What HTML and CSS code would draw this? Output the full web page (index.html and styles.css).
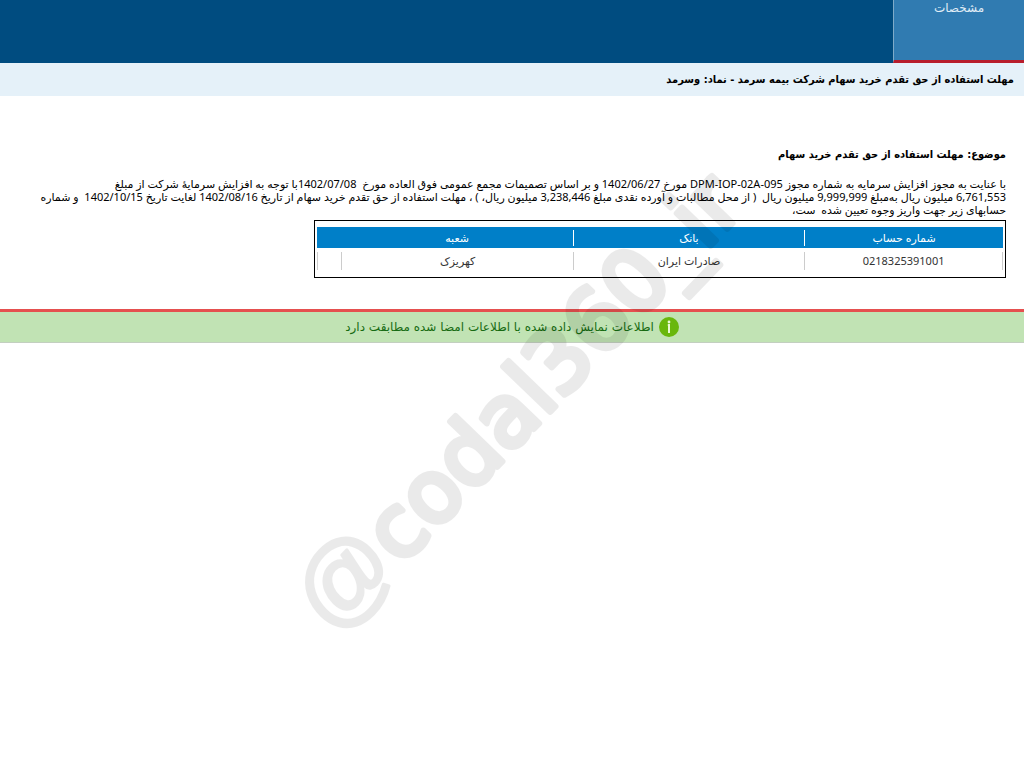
FILE: index.html
```html
<!DOCTYPE html>
<html lang="fa" dir="rtl">
<head>
  <meta charset="UTF-8" />
  <meta name="viewport" content="width=device-width, initial-scale=1.0"/>
  <title>مهلت استفاده از حق تقدم خرید سهام</title>
  <link rel="stylesheet" href="styles.css">
</head>
<body>
  <nav class="topbar">
    <a class="tab" href="#details">مشخصات</a>
  </nav>
  <h1 class="title">مهلت استفاده از حق تقدم خرید سهام شرکت بیمه سرمد - نماد: وسرمد</h1>

  <main class="content" id="details">
    <h2 class="subject">موضوع: مهلت استفاده از حق تقدم خرید سهام</h2>
    <p class="letter">
      با عنایت به مجوز افزایش سرمایه به شماره مجوز <bdi>DPM-IOP-02A-095</bdi> مورخ <bdi>1402/06/27</bdi> و بر اساس تصمیمات مجمع عمومی فوق العاده مورخ&nbsp; <bdi>1402/07/08</bdi>با توجه به افزایش سرمایهٔ شرکت از مبلغ<br>
      6,761,553 میلیون ریال به‌مبلغ 9,999,999 میلیون ریال&nbsp; ( از محل مطالبات و آورده نقدی مبلغ 3,238,446 میلیون ریال، ) ، مهلت استفاده از حق تقدم خرید سهام از تاریخ <bdi>1402/08/16</bdi> لغایت تاریخ <bdi>1402/10/15</bdi>&nbsp; و شماره<br>
      حسابهای زیر جهت واریز وجوه تعیین شده&nbsp; ست،
    </p>
    <div class="accounts">
      <table>
        <colgroup>
          <col class="col-number">
          <col>
          <col>
          <col class="col-empty">
        </colgroup>
        <thead>
          <tr>
            <th><span>شماره حساب</span></th>
            <th><span>بانک</span></th>
            <th><span>شعبه</span></th>
            <th></th>
          </tr>
        </thead>
        <tbody>
          <tr>
            <td><span>0218325391001</span></td>
            <td><span>صادرات ایران</span></td>
            <td><span>کهریزک</span></td>
            <td><span></span></td>
          </tr>
        </tbody>
      </table>
    </div>
  </main>

  <div class="notice">
    <svg class="info" viewBox="0 0 20 20" aria-hidden="true">
      <circle cx="10" cy="10" r="10" fill="#69b70c"/>
      <circle cx="10" cy="5" r="1.4" fill="#e9f8d4"/>
      <path d="M8.8 8H10v8" fill="none" stroke="#e9f8d4" stroke-width="2"/>
    </svg>
    <span>اطلاعات نمایش داده شده با اطلاعات امضا شده مطابقت دارد</span>
  </div>

  <svg class="watermark" viewBox="0 0 460 470" direction="ltr" aria-hidden="true">
    <text x="0" y="0" transform="translate(43 467) rotate(-46)"><tspan class="at">@</tspan>codal360_ir</text>
  </svg>
</body>
</html>
```

FILE: styles.css
```css
:root {
  --navy: #004c80;
  --tab: #307bb1;
  --blue: #007fc8;
  --pale: #e5f1f9;
  --red: #b81e2d;
}

body {
  font-family: "Noto Sans", "DejaVu Sans", sans-serif;
  font-size: 11px;
  color: #000;
  background: #fff;
  margin: 0;
  min-height: 100vh;
  position: relative;
}

.topbar {
  display: flex;
  height: 63px;
  background: var(--navy);
}

.tab {
  box-sizing: border-box;
  width: 131px;
  font-size: 12px;
  line-height: 16px;
  text-align: center;
  text-decoration: none;
  color: #e0edf6;
  background: var(--tab);
  border-left: 1px solid #7fabc9;
  border-bottom: 3px solid var(--red);
}

.title,
.subject {
  font-family: "DejaVu Sans Condensed", "DejaVu Sans", sans-serif;
  font-size: 11px;
}

.title {
  margin: 0;
  padding: 0 10px;
  line-height: 33px;
  background: var(--pale);
}

.content {
  padding: 48px 18px 31px;
}

.subject {
  margin: 0 0 12px;
  line-height: 21px;
}

.letter {
  margin: 0;
  line-height: 13px;
  white-space: nowrap;
}

.accounts {
  box-sizing: border-box;
  width: 70%;
  margin-top: 4px;
  padding: 6px 2px 4px;
  border: 1px solid #000;
}

table {
  width: 100%;
  table-layout: fixed;
  border-collapse: collapse;
}

.col-number {
  width: 29%;
}

.col-empty {
  width: 24px;
}

th,
td {
  padding: 0;
  font-weight: normal;
  text-align: center;
}

th {
  height: 21px;
  color: #fff;
  background: var(--blue);
}

td {
  height: 25px;
  color: #333;
}

th span,
td span {
  display: block;
  line-height: 16px;
}

td span {
  height: 18px;
  line-height: 18px;
  border-left: 1px solid #ccc;
}

th:nth-child(-n+2) span {
  border-left: 1px solid #fff;
}

td:first-child span {
  border-right: 1px solid #ccc;
}

.notice {
  display: flex;
  justify-content: center;
  align-items: center;
  gap: 5px;
  height: 30px;
  font-family: "DejaVu Sans", sans-serif;
  font-size: 12px;
  color: #176b12;
  background: #c1e3b4;
  border-top: 3px solid #e5504f;
  border-bottom: 1px solid #c3cfc0;
}

.info {
  width: 20px;
  height: 20px;
}

/* diagonal stamp over the whole letter */
.watermark {
  position: absolute;
  top: 170px;
  left: 290px;
  width: 460px;
  height: 470px;
  overflow: visible;
  opacity: 0.08;
  pointer-events: none;
}

.watermark text {
  font-family: "DejaVu Sans", sans-serif;
  font-size: 86px;
  fill: #000;
  stroke: #000;
  stroke-width: 6px;
  stroke-linejoin: round;
}

.watermark .at {
  font-family: "Liberation Sans", sans-serif;
  font-size: 96px;
  stroke-width: 3px;
}
```
